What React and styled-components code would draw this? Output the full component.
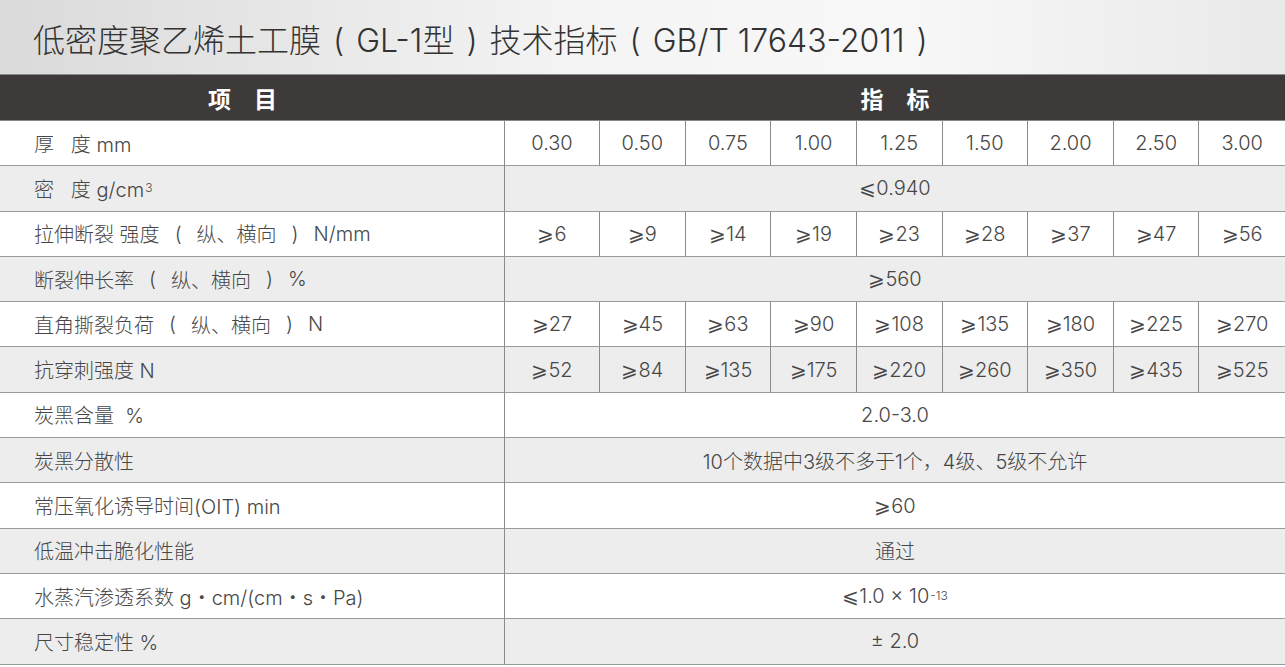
import React from 'react';
import styled, { createGlobalStyle } from 'styled-components';

const stack = '"Inter", "Noto Sans CJK SC", sans-serif';

const GlobalStyle = createGlobalStyle`
  html, body {
    margin: 0;
    padding: 0;
    background: #ffffff;
  }
  body {
    font-family: ${stack};
    color: #444;
  }
`;

const Page = styled.div`
  width: 1285px;
  height: 667px;
  overflow: hidden;
`;

const TitleBar = styled.div`
  height: 75px;
  display: flex;
  align-items: center;
  padding-left: 33px;
  box-sizing: border-box;
  background: linear-gradient(to right, #dadada 0%, #f4f4f4 45%, #f8f8f8 70%, #e9e9e9 100%);
  border-bottom: 1px solid #8a8a8a;
`;

const Title = styled.h1`
  margin: 0;
  font-family: ${stack};
  font-size: 32px;
  font-weight: 300;
  color: #333;
  padding-top: 2px;
  white-space: pre;
`;

const Paren = styled.span`
  margin: 0 ${p => (p.$big ? '12px' : '15px')};
`;

const Table = styled.div`
  display: grid;
  grid-template-columns: 505px 95px repeat(8, 1fr);
`;

const HeadCell = styled.div`
  grid-column: ${p => p.span};
  height: 45px;
  padding-right: ${p => p.$shift || '0'};
  background: #3d3a39;
  color: #fff;
  font-family: "Noto Sans CJK SC", sans-serif;
  font-size: 23px;
  font-weight: 700;
  display: flex;
  align-items: center;
  justify-content: center;
  border-bottom: 1px solid #888;
  white-space: pre;
`;

const Cell = styled.div`
  height: 45.3px;
  box-sizing: border-box;
  display: flex;
  align-items: center;
  font-size: 20px;
  font-weight: 300;
  color: #474747;
  background: ${p => (p.shade ? '#ededed' : '#fff')};
  border-bottom: 1.5px solid #9a9a9a;
  white-space: pre;
`;

const Label = styled(Cell)`
  grid-column: 1;
  padding-left: 34px;
  border-right: 1px solid #8a8a8a;
`;

const Value = styled(Cell)`
  grid-column: ${p => p.span || 'auto'};
  justify-content: center;
  border-right: ${p => (p.last ? 'none' : '1px solid #8a8a8a')};
`;

const Sup = styled.sup`
  font-size: 12px;
  vertical-align: 8px;
  line-height: 0;
  margin-left: 1px;
`;

const dir = <><Paren>(</Paren>纵、横向<Paren>)</Paren></>;

const rows = [
  { label: '厚   度 mm', values: ['0.30', '0.50', '0.75', '1.00', '1.25', '1.50', '2.00', '2.50', '3.00'] },
  { label: <>密   度 g/cm<Sup>3</Sup></>, value: '≤0.940' },
  { label: <>拉伸断裂 强度{dir}N/mm</>, values: ['≥6', '≥9', '≥14', '≥19', '≥23', '≥28', '≥37', '≥47', '≥56'] },
  { label: <>断裂伸长率{dir}%</>, value: '≥560' },
  { label: <>直角撕裂负荷{dir}N</>, values: ['≥27', '≥45', '≥63', '≥90', '≥108', '≥135', '≥180', '≥225', '≥270'] },
  { label: '抗穿刺强度 N', values: ['≥52', '≥84', '≥135', '≥175', '≥220', '≥260', '≥350', '≥435', '≥525'] },
  { label: '炭黑含量  %', value: '2.0-3.0' },
  { label: '炭黑分散性', value: '10个数据中3级不多于1个，4级、5级不允许' },
  { label: '常压氧化诱导时间(OIT) min', value: '≥60' },
  { label: '低温冲击脆化性能', value: '通过' },
  { label: '水蒸汽渗透系数 g・cm/(cm・s・Pa)', value: <>⩽1.0 × 10<Sup>-13</Sup></> },
  { label: '尺寸稳定性 %', value: '± 2.0' },
];

const fixSigns = v =>
  typeof v === 'string' ? v.replace(/≥/g, '⩾').replace(/≤/g, '⩽') : v;

export default function App() {
  return (
    <Page>
      <GlobalStyle />
      <TitleBar>
        <Title>
          低密度聚乙烯土工膜<Paren $big>(</Paren>GL-1型<Paren $big>)</Paren>技术指标
          <Paren $big>(</Paren>GB/T 17643-2011<Paren $big>)</Paren>
        </Title>
      </TitleBar>
      <Table>
        <HeadCell span="1" $shift="20px">项　目</HeadCell>
        <HeadCell span="2 / -1">指　标</HeadCell>
        {rows.map((row, i) => {
          const shade = i % 2 === 1;
          return (
            <React.Fragment key={i}>
              <Label shade={shade}>{row.label}</Label>
              {row.values ? (
                row.values.map((v, j) => (
                  <Value key={j} shade={shade} last={j === row.values.length - 1}>
                    {fixSigns(v)}
                  </Value>
                ))
              ) : (
                <Value span="2 / -1" shade={shade} last>
                  {fixSigns(row.value)}
                </Value>
              )}
            </React.Fragment>
          );
        })}
      </Table>
    </Page>
  );
}
